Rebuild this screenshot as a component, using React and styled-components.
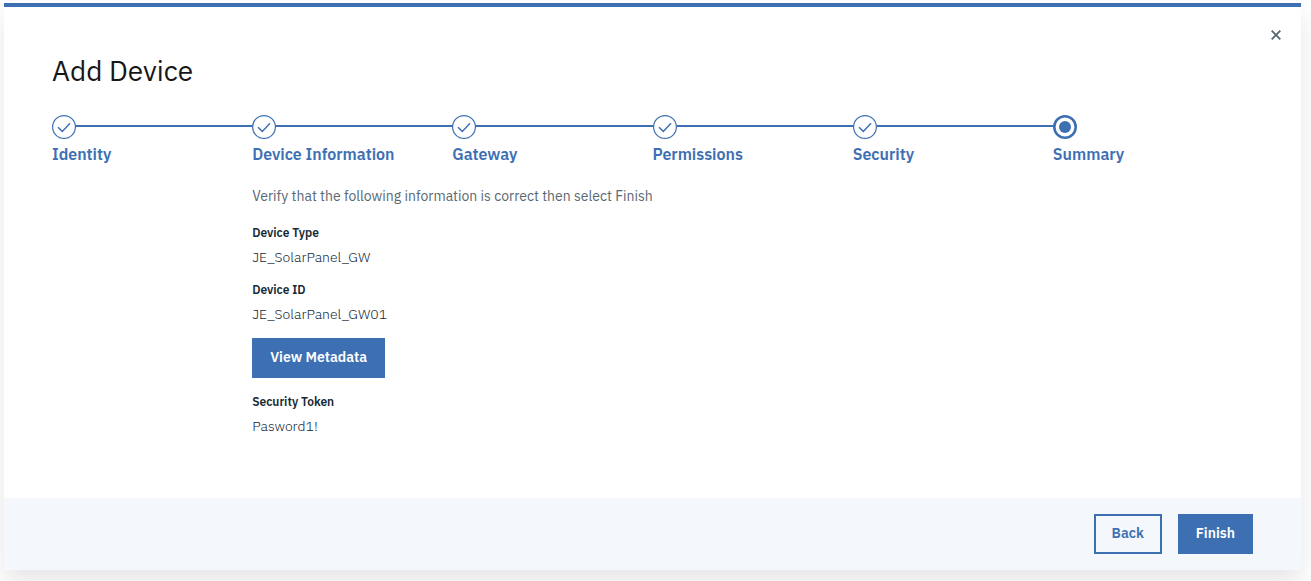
import React from "react";
import styled, { createGlobalStyle } from "styled-components";

const blue = "#3d70b2";

const GlobalStyle = createGlobalStyle`
  *, *::before, *::after { box-sizing: border-box; }
  body {
    margin: 0;
    background: #fff;
    color: #152935;
    font-family: "IBM Plex Sans", Roboto, "Liberation Sans", sans-serif;
    font-size: 14px;
    line-height: 20px;
  }
  button { font-family: inherit; cursor: pointer; }
`;

const Page = styled.div`
  padding: 3px 10px 11px 4px;
`;

const Dialog = styled.section`
  position: relative;
  border-top: 4px solid ${blue};
  background: #fff;
  box-shadow: 0 12px 24px rgba(0, 0, 0, 0.1);
`;

const CloseButton = styled.button`
  position: absolute;
  top: 16px;
  right: 13px;
  display: flex;
  padding: 7px;
  border: 0;
  background: transparent;
`;

const Content = styled.div`
  padding: 46px 48px 49px;
`;

const Title = styled.h1`
  margin: 0 0 26px;
  color: #171717;
  font-size: 28px;
  font-weight: 400;
  line-height: 36px;
`;

const Steps = styled.ol`
  display: grid;
  grid-template-columns: repeat(6, 1fr);
  margin: 0;
  padding: 0;
  list-style: none;
`;

const Step = styled.li`
  color: ${blue};
`;

const Track = styled.div`
  display: flex;
  align-items: flex-start;

  svg { flex: none; }
`;

const Line = styled.span`
  flex: 1;
  height: 2px;
  margin-top: 10px;
  background: ${blue};
`;

const StepLabel = styled.p`
  margin: 3px 0 0;
  font-size: 16px;
  font-weight: 600;
  line-height: 24px;
  white-space: nowrap;
`;

const Body = styled.div`
  display: grid;
  grid-template-columns: repeat(6, 1fr);
  padding-top: 20px;
`;

const Summary = styled.div`
  grid-column: 2 / -1;
`;

const Intro = styled.p`
  margin: 0 0 17px;
  color: #5a6872;
  font-weight: 400;
`;

const Fields = styled.dl`
  margin: 0;
`;

const Term = styled.dt`
  color: #152935;
  font-size: 12px;
  font-weight: 600;
`;

const Value = styled.dd`
  margin: 4px 0 13px;
  font-weight: 300;
`;

const Button = styled.button`
  height: 40px;
  padding: 0 16px 2px;
  border: 2px solid ${blue};
  background: ${(p) => (p.$secondary ? "transparent" : blue)};
  color: ${(p) => (p.$secondary ? blue : "#fff")};
  font-size: 14px;
  font-weight: 600;
  line-height: 16px;
`;

const Action = styled.div`
  margin: 14px 0;
  display: flex;
`;

const Footer = styled.footer`
  display: flex;
  justify-content: flex-end;
  gap: 16px;
  padding: 16px 48px;
  background: #f4f7fb;
`;

const CompleteIcon = () => (
  <svg width="24" height="24" viewBox="0 0 24 24" fill="none" stroke={blue} aria-hidden="true">
    <circle cx="12" cy="12" r="11.4" strokeWidth="1.2" />
    <path d="M6 12.3 10.3 16.4 18 8.3" strokeWidth="1.5" />
  </svg>
);

const CurrentIcon = () => (
  <svg width="24" height="24" viewBox="0 0 24 24" fill="none" aria-hidden="true">
    <circle cx="12" cy="12" r="10.7" stroke={blue} strokeWidth="2.6" />
    <circle cx="12" cy="12" r="6" fill={blue} />
  </svg>
);

const CloseIcon = () => (
  <svg width="10" height="10" viewBox="0 0 10 10" fill="none" stroke="#5a6872" strokeWidth="1.9" aria-hidden="true">
    <path d="M.7.7 9.3 9.3M9.3.7.7 9.3" />
  </svg>
);

const steps = ["Identity", "Device Information", "Gateway", "Permissions", "Security", "Summary"];

function Field({ term, value }) {
  return (
    <Fields>
      <Term>{term}</Term>
      <Value>{value}</Value>
    </Fields>
  );
}

export default function App() {
  return (
    <Page>
      <GlobalStyle />
      <Dialog role="dialog" aria-labelledby="dialog-title">
        <CloseButton type="button" aria-label="Close">
          <CloseIcon />
        </CloseButton>
        <Content>
          <Title id="dialog-title">Add Device</Title>
          <Steps>
            {steps.map((label, i) => {
              const current = i === steps.length - 1;
              return (
                <Step key={label} aria-current={current ? "step" : undefined}>
                  <Track>
                    {current ? <CurrentIcon /> : <CompleteIcon />}
                    {!current && <Line />}
                  </Track>
                  <StepLabel>{label}</StepLabel>
                </Step>
              );
            })}
          </Steps>
          <Body>
            <Summary>
              <Intro>Verify that the following information is correct then select Finish</Intro>
              <Field term="Device Type" value="JE_SolarPanel_GW" />
              <Field term="Device ID" value="JE_SolarPanel_GW01" />
              <Action>
                <Button type="button">View Metadata</Button>
              </Action>
              <Field term="Security Token" value="Pasword1!" />
            </Summary>
          </Body>
        </Content>
        <Footer>
          <Button type="button" $secondary>Back</Button>
          <Button type="button">Finish</Button>
        </Footer>
      </Dialog>
    </Page>
  );
}
